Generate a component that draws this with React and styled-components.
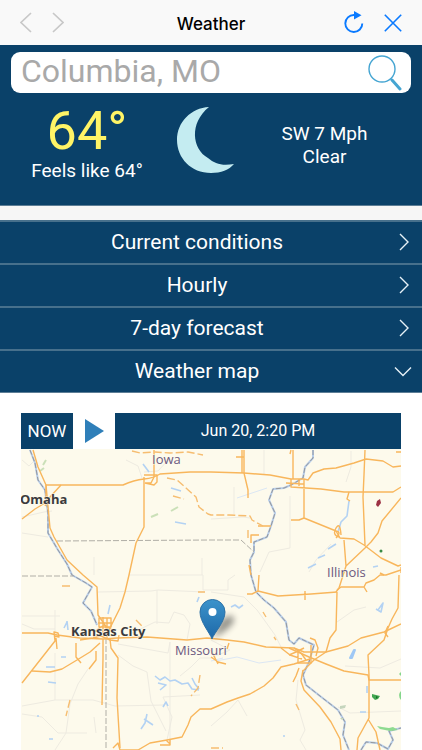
import React, { useState } from "react";
import styled, { createGlobalStyle } from "styled-components";

const GlobalStyle = createGlobalStyle`
  * {
    box-sizing: border-box;
  }

  body {
    margin: 0;
    background: #ffffff;
    font-family: Roboto, "Liberation Sans", sans-serif;
  }

  button {
    padding: 0;
    border: 0;
    background: none;
    font-family: inherit;
    cursor: pointer;
  }

  svg {
    display: block;
  }
`;

/* ========== Browser bar ========== */
const TopBar = styled.header`
  display: grid;
  grid-template-columns: 1fr auto 1fr;
  align-items: center;
  height: 45px;
  padding: 0 20px;
  background: #f9f9f9;
`;

const BarGroup = styled.div`
  display: flex;
  align-items: center;
  justify-content: ${({ $end }) => ($end ? "flex-end" : "flex-start")};
  gap: 20px;
`;

const BarButton = styled.button`
  color: ${({ disabled }) => (disabled ? "#c8c8c8" : "#0a7aff")};
`;

const Title = styled.h1`
  margin: 0;
  padding-top: 2px;
  font: 500 17px/22px Inter, "Liberation Sans", sans-serif;
  color: #000000;
`;

/* ========== Summary ========== */
const Summary = styled.section`
  padding: 7px 11px 0;
  height: 161px;
  background: #0a4169;
  border-bottom: 1px solid #5d7e96;
`;

const SearchBox = styled.form`
  display: flex;
  align-items: center;
  height: 41px;
  padding: 0 8px 0 10px;
  border-radius: 9px;
  background: #ffffff;
`;

const SearchInput = styled.input`
  flex: 1;
  min-width: 0;
  height: 41px;
  padding: 0 0 3px;
  border: 0;
  outline: 0;
  background: none;
  font: 400 32px/38px Roboto, sans-serif;
  color: #333333;

  &::placeholder {
    color: #a9a9a9;
    opacity: 1;
  }
`;

const Conditions = styled.div`
  display: grid;
  grid-template-columns: 38% 21% 36%;
  align-items: start;
  padding-top: 10px;
  text-align: center;
  color: #ffffff;
`;

const Temperature = styled.div`
  font-size: 54px;
  line-height: 56px;
  color: #fff466;
`;

const Detail = styled.div`
  font-size: 19px;
  line-height: 23px;
`;

const Wind = styled.div`
  padding: 19px 0 0 11px;
`;

const MoonCell = styled.div`
  display: flex;
  justify-content: center;
  padding-top: 4px;
`;

/* ========== Menu ========== */
const Menu = styled.nav`
  margin-top: 14px;
  border-bottom: 1px solid #5d7e96;
`;

const MenuRow = styled.button`
  display: grid;
  grid-template-columns: 1fr 18px;
  align-items: center;
  width: 100%;
  height: 43px;
  padding: 0 10px 2px 0;
  border-top: 2px solid #47708c;
  background: #0a4169;
  color: #ffffff;
  font-size: 21px;
  line-height: 26px;
`;

const Page = styled.main`
  background: #f6f6f6;
`;

/* ========== Map ========== */
const MapPanel = styled.section`
  padding: 20px 21px 0;
  background: #ffffff;
`;

const Timeline = styled.div`
  display: grid;
  grid-template-columns: 52px 42px 1fr;
  align-items: center;
  height: 36px;
`;

const NowButton = styled.button`
  height: 36px;
  background: #0a4169;
  color: #ffffff;
  font-size: 17px;
`;

const PlayButton = styled.button`
  display: flex;
  justify-content: center;
`;

const Stamp = styled.div`
  background: #0a4169;
  color: #ffffff;
  font-size: 16px;
  line-height: 36px;
  text-align: center;
`;

const MapDrawing = styled.svg`
  width: 100%;
  height: auto;
  font-family: "Open Sans", "Noto Sans", sans-serif;
`;

const Chevron = ({ direction }) => {
  const paths = {
    left: "M11 1 1 10.500 11 20",
    right: "M1 1 11 10.500 1 20",
  };
  return (
    <svg width="12" height="21" viewBox="0 0 12 21" fill="none" stroke="currentColor" strokeWidth="1.700">
      <path d={paths[direction]} />
    </svg>
  );
};

const RowArrow = ({ open }) => (
  <svg width="18" height="18" viewBox="0 0 18 18" fill="none" stroke="#e6f1f7" strokeWidth="1.400">
    <path d={open ? "M1 5.500 9 13.500 17 5.500" : "M6 1 14 9 6 17"} />
  </svg>
);

const ReloadIcon = () => (
  <svg width="20" height="23" viewBox="0 0 20 23" fill="none">
    <path d="M18.300 12.500A8.500 8.500 0 1 1 10 4" stroke="currentColor" strokeWidth="1.900" />
    <path d="M10 0v8.500L17.500 4.200Z" fill="currentColor" />
  </svg>
);

const CloseIcon = () => (
  <svg width="18" height="18" viewBox="0 0 18 18" stroke="currentColor" strokeWidth="1.600">
    <path d="M.8.800 17.200 17.200M17.200.800.800 17.200" />
  </svg>
);

const SearchIcon = () => (
  <svg width="36" height="37" viewBox="0 0 36 37" fill="none" stroke="#45a5d2">
    <circle cx="15" cy="15" r="13" strokeWidth="1.400" />
    <path d="m24 25 1.500 2" strokeWidth="1.500" />
    <path d="M25 26 33 35" strokeWidth="3" strokeLinecap="round" />
  </svg>
);

const MoonIcon = () => (
  <svg width="58" height="67" viewBox="0 0 58 67">
    <path
      d="M33 0C15 1 1 15 1 33s14 33 34 33c10 0 18-3 23-9-12 2-19 0-26-6C16 42 13 16 33 0Z"
      fill="#c4ecf1"
    />
  </svg>
);

const minorRoads = [
  "M22 533 48 537M60 616H22M22 624 34 629 55 629M96 733 94 717",
  "M94 557V575M129 575H203V590H228V580L235 575",
  "M98 592 151 591 158 590 205 592M157 590V624",
  "M22 714 42 717 58 733 87 733M55 653V700L22 706M55 700 93 700 115 706 164 705",
  "M88 669 78 684 70 704 66 733 55 750M118 655 133 666 147 672 151 701 166 731",
  "M170 745V642L168 653 118 644M130 634 155 622 169 623 174 612 184 615 190 624 187 640",
  "M180 676 191 667 200 658 211 658 230 650 211 640M211 592 244 597 257 610 265 621 275 635 282 649",
  "M167 740 172 717 163 697 200 695M211 726 227 712 238 700 247 716",
  "M298 680 296 700 305 730 300 740 306 750M22 517 44 512 52 511",
  "M264 450V475M290 496V548L269 552 260 572M211 519 243 517 250 518",
  "M309 572 316 560 331 544M345 666 380 668 401 659M337 622 354 610 366 607",
  "M338 707 350 713 401 711M126 460 138 466 142 478M144 472 158 471 169 459",
  "M55 610V632M22 460 29 466 34 461M234 514V487M202 558V575M351 451V467L346 482",
];

const roads = [
  "M46 485H123Q134 480 144 479T160 474L190 472H211L244 473 270 475 291 479 304 479 308 480 313 473 324 469 336 468 354 463 366 459 383 461 393 467 401 466",
  "M291 479V487L321 489 344 492 393 492 401 487M304 479V518L336 531Q342 532 336 538M304 518 299 520H291",
  "M293 450V479M299 479V486M304 484 286 483M336 531 340 538 354 539 364 545 381 558 398 566 401 565",
  "M365 450 364 475 363 497 365 545M401 498 382 521 378 533 371 542 365 548 346 566M344 540 346 566 339 588 336 592",
  "M349 492 347 499 350 501M339 537Q332 535 336 528T341 535",
  "M33 450 38 467 46 485 50 528 54 537 67 560 83 575 97 587 98 615 105 625 109 636",
  "M22 519 35 509 45 503M61 485 50 497 45 506M46 485V499",
  "M154 450V477L151 483H145M144 475H157V482L154 485 145 483M144 477V527L136 543 129 575 125 592 120 608 113 622 108 632",
  "M22 633H48L57 635 80 638 103 639 117 638 147 637 187 640 207 638 227 640 244 642 266 647 294 648 304 652 326 652 348 646 361 638 384 632 401 624",
  "M22 683 55 641 54 632 58 633 59 637 54 636M56 638 57 649",
  "M103 639V658L102 705M110 639 111 648 118 658 117 698 120 748M100 643 90 652 77 660 62 669 50 672 32 671M96 651V660L89 669",
  "M76 643V657L81 663M80 640 93 638 101 636 110 640 118 641 119 635",
  "M99 618H111V627H99ZM103 617V633M107 618V638M98 623H112M94 638V632L104 625 114 631",
  "M259 575 258 591 278 596 311 594 337 592M305 591V600M258 591 252 594 247 594M251 575 249 565",
  "M337 592 336 630 330 638 326 652 314 660 303 671M337 590 341 587H364L367 592M364 587 366 583 374 580 380 575 386 575 401 570",
  "M399 575 398 608 392 619 388 628 384 640 368 655 369 675 369 718 358 738 357 750M368 719 376 732 380 750",
  "M289 648 309 657 326 664 344 671 368 675 369 680H401M388 626 385 633 388 637",
  "M310 659 294 664 281 667 273 678 264 686 250 694 238 698 227 702 211 709H200L191 717 188 725 182 737 167 740 150 743 138 750",
  "M113 748 118 743 120 750H138M160 745H170V739M166 740 170 744",
  "M281 648 290 655 302 659M298 650V663H311V645M294 648 301 653 306 660M310 638 315 640 318 648 316 656",
  "M289 655 296 652 304 648M299 668 296 676 293 682M303 670 301 681 304 690 320 707 331 722 340 739 341 750",
  "M244 450V473L248 490V498M242 450V473M236 457H244M291 450 290 454M396 452H401M258 526H271M259 535H251V543",
  "M211 657 218 662 226 664M211 650 218 664M229 643 227 649",
  "M384 575 380 573M401 567V573",
];

const dashedRoads = [
  "M132 451 140 453 155 452 170 453 188 452 203 455",
  "M167 478 177 480 186 488 196 497 199 507 208 514 211 515 229 515 250 516 252 520 263 526",
  "M62 586H73M70 700 66 716M198 592H205M200 675 198 688 191 696M211 748 223 748",
  "M274 637 276 640M263 612 266 617M248 530V540M173 496 184 499M296 704 299 710M136 620 142 626",
];

const rivers = [
  "M313 450V458L305 467 303 478 291 485 284 488 273 489 269 500 275 513 271 526 267 537 254 542 254 552 250 560 251 575 256 592 264 600 274 608 286 622 289 640 294 644 299 638 314 645 309 662 303 675 306 685 320 696 338 710 345 722 343 735 349 750",
  "M30 450 35 463 38 480 45 490 48 513 48 533 58 550 67 564 72 575 86 583 92 587 83 603 91 611 97 625",
  "M361 750 366 742 377 743 388 749 393 740 389 731 401 728",
];

const streams = [
  "M349 501 347 516 341 522 338 532M336 544 328 549M325 555 318 558M316 564 308 568",
  "M155 676 160 680 165 677 170 681 175 680 182 684 188 683 192 689 199 690M158 683 166 685 160 690M192 678 195 684 199 689",
  "M147 714 145 723 141 729M144 719 153 725M163 707 166 702 168 706M68 630 67 621M64 628 67 622",
  "M231 607 235 605 239 608 243 605M378 610 383 603 381 612 376 609M367 686V693M108 614 110 605",
  "M143 464 149 472M171 488 181 491M175 522 186 524M48 682 56 683M61 657H66M46 667H55M197 602 199 597",
  "M37 716H39M49 739H53M360 712H366M373 567 378 566M283 736H285",
];

const borders = ["M57 541 211 540 241 540 254 552", "M22 576H73", "M106 638V750"];

const WeatherMap = () => (
  <MapDrawing viewBox="21 449 380 301" role="img" aria-label="Road map of Missouri">
    <defs>
      <linearGradient id="pin" x1="0" y1="0" x2="0" y2="1">
        <stop offset="0" stopColor="#3c93cb" />
        <stop offset="1" stopColor="#1d68a8" />
      </linearGradient>
      <filter id="soft" x="-50%" y="-50%" width="200%" height="200%">
        <feGaussianBlur stdDeviation="3" />
      </filter>
    </defs>
    <rect x="21" y="449" width="380" height="301" fill="#fdfaec" />
    <g fill="none" strokeLinejoin="round">
      {minorRoads.map((d) => (
        <path key={d} d={d} stroke="#eeebe1" strokeWidth="1" />
      ))}
      {streams.map((d) => (
        <path key={d} d={d} stroke="#b3d2f3" strokeWidth="1.600" />
      ))}
      <path d="m350 658 4-8 1 0-3 8Z" fill="#9fc8f5" stroke="#9fc8f5" strokeWidth="2" />
      <path d="m43 465 3-5M40 471l4-3M151 517l7-3M171 511l7-4" stroke="#cbe0b8" strokeWidth="2" />
      <path d="m237 498 18-6 12-4M211 661l12-3M281 660l-22 3-22-6-21 4" stroke="#dce7f4" />
      {rivers.map((d) => (
        <g key={d}>
          <path d={d} stroke="#b7cdea" strokeWidth="2" />
          <path d={d} stroke="#96989c" strokeWidth="1" strokeDasharray="5 2" />
        </g>
      ))}
      {borders.map((d) => (
        <path key={d} d={d} stroke="#b0aea6" strokeWidth="1" strokeDasharray="6 2" />
      ))}
      {roads.map((d) => (
        <path key={d} d={d} stroke="#f8b65c" strokeWidth="1.400" />
      ))}
      {dashedRoads.map((d) => (
        <path key={d} d={d} stroke="#f6bd70" strokeWidth="1.400" strokeDasharray="8 3" />
      ))}
    </g>
    {/* radar echoes and parks */}
    <path d="m377 501 3-2 1 4-3 4-2-2Z" fill="#9c3144" />
    <circle cx="381" cy="551" r="1.500" fill="#378a45" />
    <path d="m372 694 4 1 4 1-2 3-3 1-3-3Z" fill="#41a651" />
    <path d="m376 696 2 1-2 2Z" fill="#176b2a" />
    <path d="m377 726 5 1 7 1 4-1 5 3-8 1-10-2Z" fill="#8fdb91" />
    <path d="M401 691q-4 4 0 9ZM401 672l-2 2 2 2Z" fill="#85d68b" />
    <path d="m340 706 6-1-1 3-5 1ZM340 718h4l-2 2Z" fill="#c5d5bd" />

    <g fill="#3b3b3d" stroke="#fdfaec" strokeWidth="1" paintOrder="stroke" fontWeight="700">
      <text x="20" y="504" fontSize="13">Omaha</text>
      <text x="71" y="636" fontSize="13">Kansas City</text>
    </g>
    <g fill="#6b587f" stroke="#fdfaec" strokeWidth="1" paintOrder="stroke" fontSize="13">
      <text x="152" y="464">Iowa</text>
      <text x="327" y="577">Illinois</text>
      <text x="175" y="655">Missouri</text>
    </g>

    <path d="m213 638 7-17q14-11 14 0-3 8-21 17Z" fill="#000000" opacity=".4" filter="url(#soft)" />
    <path
      d="M212 639c-2-6-12-17-12-27a12 12 0 0 1 25 0c0 10-11 21-13 27Z"
      fill="url(#pin)"
      stroke="#2b70a6"
    />
    <circle cx="212.500" cy="612" r="4" fill="#ffffff" />
  </MapDrawing>
);

const sections = ["Current conditions", "Hourly", "7-day forecast", "Weather map"];

const App = () => {
  const [open, setOpen] = useState("Weather map");

  return (
    <>
      <GlobalStyle />
      <TopBar>
        <BarGroup>
          <BarButton aria-label="Back" disabled>
            <Chevron direction="left" />
          </BarButton>
          <BarButton aria-label="Forward" disabled>
            <Chevron direction="right" />
          </BarButton>
        </BarGroup>
        <Title>Weather</Title>
        <BarGroup $end>
          <BarButton aria-label="Reload">
            <ReloadIcon />
          </BarButton>
          <BarButton aria-label="Close">
            <CloseIcon />
          </BarButton>
        </BarGroup>
      </TopBar>
      <Page>
        <Summary>
          <SearchBox onSubmit={(e) => e.preventDefault()}>
            <SearchInput aria-label="Location" placeholder="Columbia, MO" />
            <button type="submit" aria-label="Search">
              <SearchIcon />
            </button>
          </SearchBox>
          <Conditions>
            <div>
              <Temperature>64°</Temperature>
              <Detail>Feels like 64°</Detail>
            </div>
            <MoonCell>
              <MoonIcon />
            </MoonCell>
            <Wind>
              <Detail>SW 7 Mph</Detail>
              <Detail>Clear</Detail>
            </Wind>
          </Conditions>
        </Summary>

        <Menu>
          {sections.map((name) => (
            <MenuRow
              key={name}
              aria-expanded={open === name}
              onClick={() => setOpen(open === name ? "" : name)}
            >
              <span>{name}</span>
              <RowArrow open={open === name} />
            </MenuRow>
          ))}
        </Menu>

        {open === "Weather map" && (
          <MapPanel>
            <Timeline>
              <NowButton>NOW</NowButton>
              <PlayButton aria-label="Play">
                <svg width="19" height="24" viewBox="0 0 19 24">
                  <path d="M0 0 19 12 0 24Z" fill="#2f7fb9" />
                </svg>
              </PlayButton>
              <Stamp>Jun 20, 2:20 PM</Stamp>
            </Timeline>
            <WeatherMap />
          </MapPanel>
        )}
      </Page>
    </>
  );
};

export default App;
